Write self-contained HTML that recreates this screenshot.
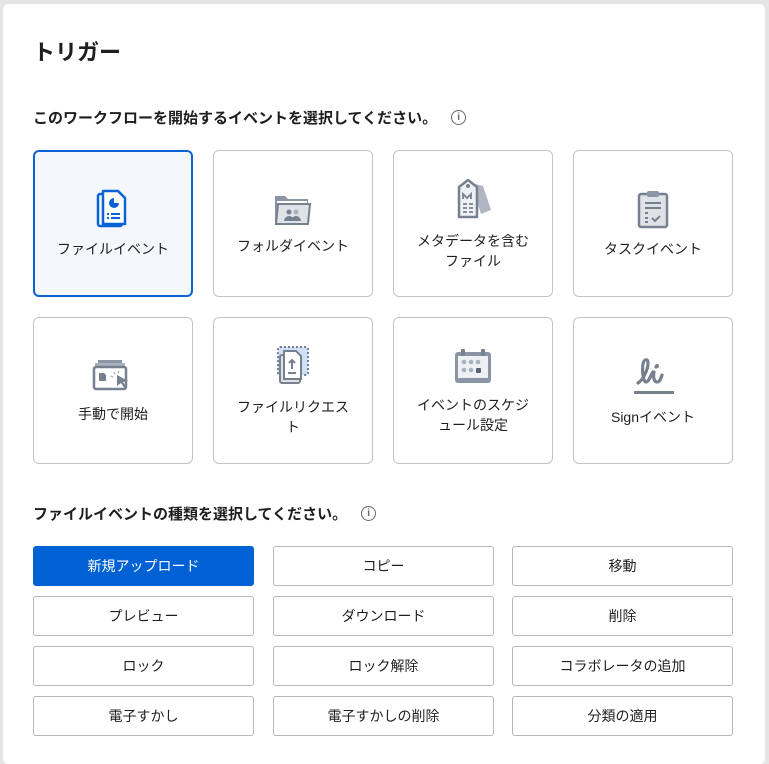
<!DOCTYPE html>
<html><head><meta charset="utf-8"><style>
*{box-sizing:border-box;margin:0;padding:0}
body{width:769px;height:758px;background:#e5e5e5;font-family:"Liberation Sans","Noto Sans CJK JP",sans-serif;color:#1e1e1e;overflow:hidden;position:relative}
.card{position:absolute;left:3px;top:4px;width:762px;height:760px;background:#fff;border-radius:5px}
h1{position:absolute;left:33px;top:35px;font-size:22px;font-weight:bold}
.lbl{position:absolute;left:33px;font-size:15px;font-weight:bold;display:flex;align-items:center}
.info{display:inline-block;width:15px;height:15px;border:1.3px solid #666;border-radius:50%;margin-left:14px;font-size:10px;text-align:center;line-height:13px;color:#666;font-weight:bold}
.tile{position:absolute;width:160px;height:147px;border:1px solid #c4c4c4;border-radius:6px;display:flex;flex-direction:column;align-items:center;justify-content:center;font-size:14px;text-align:center;line-height:20px}
.tile.sel{border:2px solid #0a63d6;background:#f4f8fd}
.tile svg{margin-bottom:10px}
.btn{position:absolute;width:221px;height:40px;border:1px solid #b8b8b8;border-radius:3px;display:flex;align-items:center;justify-content:center;font-size:14px}
.btn.on{background:#0061d5;border-color:#0061d5;color:#fff}
</style></head><body>
<div class="card"></div>
<h1>トリガー</h1>
<div class="lbl" style="top:107px">このワークフローを開始するイベントを選択してください。<span class="info">i</span></div>

<div class="tile sel" style="left:33px;top:150px"><svg width="34" height="40" viewBox="0 0 34 40"><rect x="2" y="5" width="24" height="32" rx="2" fill="none" stroke="#0a63d6" stroke-width="2.5"/><path d="M7 2h15l7 7v26H7z" fill="#fff" stroke="#0a63d6" stroke-width="2.5" stroke-linejoin="round"/><path d="M18 9a5 5 0 1 0 5 5h-5z" fill="#0a63d6"/><path d="M11 25h2M15 25h9M11 29h2M15 29h9" stroke="#0a63d6" stroke-width="2"/></svg>ファイルイベント</div>
<div class="tile" style="left:213px;top:150px"><svg width="40" height="34" viewBox="0 0 40 34"><path d="M2 4h10l3 3h20v24H2z" fill="#8a95a5"/><rect x="4" y="9" width="30" height="4" fill="#fff"/><path d="M5 12h32l-2 20H3z" fill="#dfe3e8" stroke="#77808f" stroke-width="2"/><circle cx="16" cy="20" r="2.5" fill="#77808f"/><circle cx="23" cy="20" r="2.5" fill="#aab1bc"/><path d="M11 29a5 5 0 0 1 10 0zM18 29a5 5 0 0 1 10 0z" fill="#77808f"/></svg>フォルダイベント</div>
<div class="tile" style="left:393px;top:150px"><svg width="40" height="44" viewBox="0 0 40 44"><path d="M18 6l12 3 8 24-10 4z" fill="#b0b7c2"/><path d="M6 10l9-7 9 7v30H6z" fill="#eef0f3" stroke="#77808f" stroke-width="2.5" stroke-linejoin="round"/><circle cx="15" cy="9" r="2" fill="#77808f"/><path d="M10 22v-5l4 4 4-4v5M10 27h4M16 27h4M10 31h4M16 31h4M10 35h4M16 35h4" stroke="#77808f" stroke-width="1.8" fill="none"/></svg>メタデータを含む<br>ファイル</div>
<div class="tile" style="left:573px;top:150px"><svg width="34" height="40" viewBox="0 0 34 40"><rect x="3" y="5" width="28" height="33" rx="2" fill="#dfe3e8" stroke="#77808f" stroke-width="2.5"/><rect x="11" y="2" width="12" height="6" rx="2" fill="#8a95a5"/><path d="M9 14h16M9 19h16M9 24h3M9 29h3M9 33h3M16 29l3 3 5-5" stroke="#77808f" stroke-width="2" fill="none"/></svg>タスクイベント</div>

<div class="tile" style="left:33px;top:317px"><svg width="42" height="36" viewBox="0 0 42 36"><rect x="6" y="2" width="24" height="4" fill="#8a95a5"/><rect x="3" y="5" width="30" height="4" fill="#aab1bc"/><rect x="2" y="9" width="32" height="22" rx="2" fill="#fff" stroke="#77808f" stroke-width="2.5"/><path d="M7 15h5l2 2v6H7z" fill="#77808f"/><path d="M25 17l11 6-5 1 4 6-2 1-4-6-4 3z" fill="#77808f"/><path d="M22 14l1 2M19 18l2 1M27 13l-1 2" stroke="#aab1bc" stroke-width="1.5"/></svg>手動で開始</div>
<div class="tile" style="left:213px;top:317px"><svg width="36" height="42" viewBox="0 0 36 42"><rect x="3" y="2" width="30" height="28" rx="2" fill="#cfe0f7" stroke="#77808f" stroke-width="2" stroke-dasharray="2 2"/><rect x="5" y="10" width="20" height="28" rx="2" fill="#dfe3e8" stroke="#77808f" stroke-width="2"/><path d="M9 6h12l5 5v23H9z" fill="#fff" stroke="#77808f" stroke-width="2"/><path d="M17 24v-9M14 18l3-3 3 3M13 28h8" stroke="#77808f" stroke-width="2" fill="none"/></svg>ファイルリクエス<br>ト</div>
<div class="tile" style="left:393px;top:317px"><svg width="40" height="38" viewBox="0 0 40 38"><rect x="2" y="5" width="36" height="31" rx="3" fill="#8a95a5"/><rect x="5" y="9" width="30" height="22" fill="#eef0f3"/><rect x="8" y="2" width="4" height="7" rx="1" fill="#77808f"/><rect x="28" y="2" width="4" height="7" rx="1" fill="#77808f"/><g fill="#aab1bc"><circle cx="11" cy="15" r="2.3"/><circle cx="18" cy="15" r="2.3"/><circle cx="25" cy="15" r="2.3"/><circle cx="11" cy="23" r="2.3"/><circle cx="18" cy="23" r="2.3"/></g><rect x="23" y="21" width="5" height="5" rx="1" fill="#5c6573"/></svg>イベントのスケジ<br>ュール設定</div>
<div class="tile" style="left:573px;top:317px"><svg width="42" height="42" viewBox="0 0 42 42"><path d="M6 28c6-4 10-14 10-20 0-5-4-4-5 1-1 6 0 18 3 18s5-8 7-10M24 12v0M22 17c-1 5 0 10 3 10s4-4 5-7" stroke="#77808f" stroke-width="3.2" fill="none" stroke-linecap="round"/><circle cx="25" cy="11" r="2" fill="#77808f"/><rect x="2" y="36" width="40" height="3" fill="#77808f"/></svg>Signイベント</div>

<div class="lbl" style="top:503px">ファイルイベントの種類を選択してください。<span class="info">i</span></div>

<div class="btn on" style="left:33px;top:546px">新規アップロード</div>
<div class="btn" style="left:273px;top:546px">コピー</div>
<div class="btn" style="left:512px;top:546px">移動</div>
<div class="btn" style="left:33px;top:596px">プレビュー</div>
<div class="btn" style="left:273px;top:596px">ダウンロード</div>
<div class="btn" style="left:512px;top:596px">削除</div>
<div class="btn" style="left:33px;top:646px">ロック</div>
<div class="btn" style="left:273px;top:646px">ロック解除</div>
<div class="btn" style="left:512px;top:646px">コラボレータの追加</div>
<div class="btn" style="left:33px;top:696px">電子すかし</div>
<div class="btn" style="left:273px;top:696px">電子すかしの削除</div>
<div class="btn" style="left:512px;top:696px">分類の適用</div>
</body></html>
